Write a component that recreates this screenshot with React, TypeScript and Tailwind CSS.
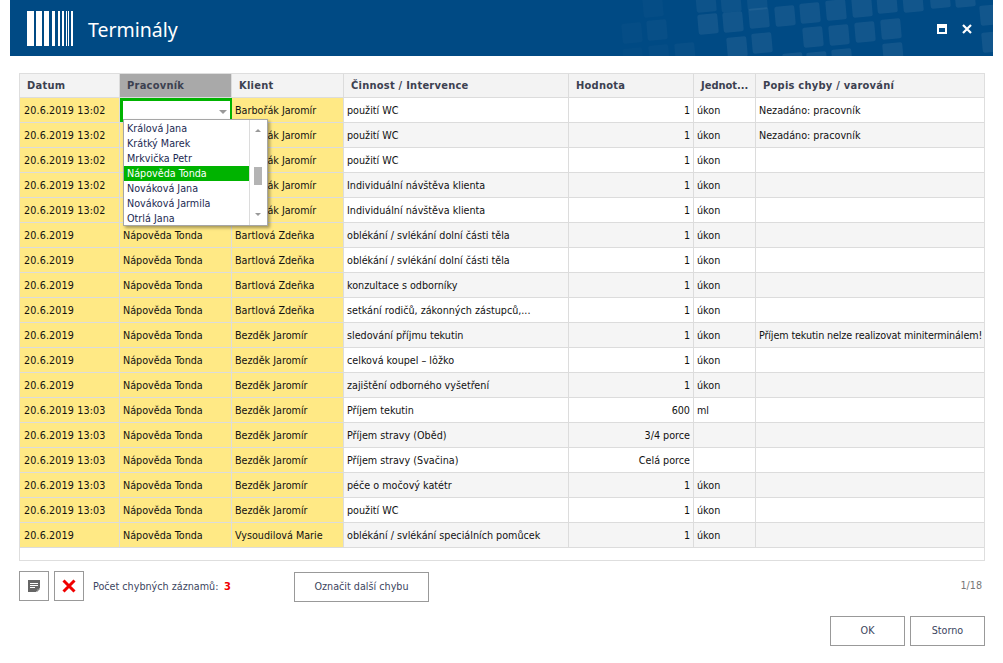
type Row = {
  datum: string;
  pracovnik: string;
  klient: string;
  cinnost: string;
  hodnota: string;
  jednotka: string;
  popis?: string;
};

const barborak = 'Barbořák Jaromír';
const bartlova = 'Bartlová Zdeňka';
const bezdek = 'Bezděk Jaromír';
const tonda = 'Nápověda Tonda';

const rows: Row[] = [
  { datum: '20.6.2019 13:02', pracovnik: '', klient: barborak, cinnost: 'použití WC', hodnota: '1', jednotka: 'úkon', popis: 'Nezadáno: pracovník' },
  { datum: '20.6.2019 13:02', pracovnik: '', klient: barborak, cinnost: 'použití WC', hodnota: '1', jednotka: 'úkon', popis: 'Nezadáno: pracovník' },
  { datum: '20.6.2019 13:02', pracovnik: '', klient: barborak, cinnost: 'použití WC', hodnota: '1', jednotka: 'úkon' },
  { datum: '20.6.2019 13:02', pracovnik: '', klient: barborak, cinnost: 'Individuální návštěva klienta', hodnota: '1', jednotka: 'úkon' },
  { datum: '20.6.2019 13:02', pracovnik: '', klient: barborak, cinnost: 'Individuální návštěva klienta', hodnota: '1', jednotka: 'úkon' },
  { datum: '20.6.2019', pracovnik: tonda, klient: bartlova, cinnost: 'oblékání / svlékání dolní části těla', hodnota: '1', jednotka: 'úkon' },
  { datum: '20.6.2019', pracovnik: tonda, klient: bartlova, cinnost: 'oblékání / svlékání dolní části těla', hodnota: '1', jednotka: 'úkon' },
  { datum: '20.6.2019', pracovnik: tonda, klient: bartlova, cinnost: 'konzultace s odborníky', hodnota: '1', jednotka: 'úkon' },
  { datum: '20.6.2019', pracovnik: tonda, klient: bartlova, cinnost: 'setkání rodičů, zákonných zástupců,...', hodnota: '1', jednotka: 'úkon' },
  { datum: '20.6.2019', pracovnik: tonda, klient: bezdek, cinnost: 'sledování příjmu tekutin', hodnota: '1', jednotka: 'úkon', popis: 'Příjem tekutin nelze realizovat miniterminálem!' },
  { datum: '20.6.2019', pracovnik: tonda, klient: bezdek, cinnost: 'celková koupel – lôžko', hodnota: '1', jednotka: 'úkon' },
  { datum: '20.6.2019', pracovnik: tonda, klient: bezdek, cinnost: 'zajištění odborného vyšetření', hodnota: '1', jednotka: 'úkon' },
  { datum: '20.6.2019 13:03', pracovnik: tonda, klient: bezdek, cinnost: 'Příjem tekutin', hodnota: '600', jednotka: 'ml' },
  { datum: '20.6.2019 13:03', pracovnik: tonda, klient: bezdek, cinnost: 'Příjem stravy (Oběd)', hodnota: '3/4 porce', jednotka: '' },
  { datum: '20.6.2019 13:03', pracovnik: tonda, klient: bezdek, cinnost: 'Příjem stravy (Svačina)', hodnota: 'Celá porce', jednotka: '' },
  { datum: '20.6.2019 13:03', pracovnik: tonda, klient: bezdek, cinnost: 'péče o močový katétr', hodnota: '1', jednotka: 'úkon' },
  { datum: '20.6.2019 13:03', pracovnik: tonda, klient: bezdek, cinnost: 'použití WC', hodnota: '1', jednotka: 'úkon' },
  { datum: '20.6.2019', pracovnik: tonda, klient: 'Vysoudilová Marie', cinnost: 'oblékání / svlékání speciálních pomůcek', hodnota: '1', jednotka: 'úkon' },
];

const workers = ['Králová Jana', 'Krátký Marek', 'Mrkvička Petr', 'Nápověda Tonda', 'Nováková Jana', 'Nováková Jarmila', 'Otrlá Jana'];

// [x, y, opacity] of the tiles in the header picture
const tiles = [
  [653, 7, 0.02], [706, 2, 0.05], [731, 2, 0.05], [757, 0, 0.05],
  [708, 24, 0.07], [733, 22, 0.07], [759, 18, 0.07], [785, 16, 0.07], [810, 13, 0.07], [836, 10, 0.07], [862, 7, 0.07], [887, 3, 0.07], [913, 2, 0.07], [940, -2, 0.07], [965, -3, 0.07], [990, 15, 0.07],
  [632, 33, 0.02], [657, 30, 0.03], [813, 37, 0.07], [839, 35, 0.07], [865, 32, 0.07], [891, 29, 0.07], [992, 42, 0.07],
  [737, 47, 0.07], [762, 43, 0.07], [893, 53, 0.07], [685, 53, 0.03], [659, 55, 0.02], [633, 58, 0.01], [793, 63, 0.07], [817, 62, 0.07], [842, 59, 0.07],
];

const bars = [[27, 7], [36, 6], [44, 5], [52, 3], [58, 2], [62, 2], [66, 1], [68, 1], [71, 1], [72, 1]];

const head = 'flex items-center pt-[1px] pl-[7px] border-r border-[#dcdcdc] whitespace-nowrap overflow-hidden';
const cell = 'flex items-center pt-[3px] border-r border-[#dcdcdc] whitespace-nowrap overflow-hidden';

function App() {
  return (
    <div className="w-[1003px] h-[663px] bg-white overflow-hidden text-[10.7px] text-[#111] font-['DejaVu_Sans_Condensed','DejaVu_Sans',sans-serif]">
      {/* Title bar */}
      <div className="relative mx-[10px] h-[56px] bg-[#004a84] flex items-center overflow-hidden">
        <svg className="absolute left-[-10px] top-0" width="1003" height="56">
          {tiles.map(([x, y, o]) => (
            <rect key={`${x}-${y}`} x={x - 10} y={y - 10} width="20" height="20" rx="2" fill="#fff" fillOpacity={o} transform={`rotate(-5 ${x} ${y})`} />
          ))}
          {bars.map(([x, w]) => (
            <rect key={x} x={x} y="11" width={w} height="35" fill="#fff" />
          ))}
        </svg>
        <span className="relative ml-[78px] mt-[4px] text-[19.5px] text-white font-['Noto_Sans',sans-serif]">Terminály</span>
        <div className="relative ml-auto mr-[21px] mt-[2px] flex items-center gap-[15px]">
          <svg width="10" height="10" viewBox="0 0 10 10">
            <path d="M0 0h10v10H0z M2 4v4h6V4z" fill="#fff" fillRule="evenodd" />
          </svg>
          <svg width="10" height="10" viewBox="0 0 10 10">
            <path d="M1 1l8 8M9 1l-8 8" stroke="#fff" strokeWidth="2.2" />
          </svg>
        </div>
      </div>

      {/* Grid */}
      <div className="relative ml-[19px] mt-[17px] w-[966px] h-[488px] border border-[#dedede]">
        <div className="grid grid-cols-[100px_112px_112px_225px_125px_62px_228px] h-[24px] border-b border-[#dcdcdc] bg-[#f3f3f3] font-bold text-[11px] tracking-[0.25px] text-[#3c4150]">
          <div className={head}>Datum</div>
          <div className={`${head} bg-[#a9a9a9]`}>Pracovník</div>
          <div className={head}>Klient</div>
          <div className={head}>Činnost / Intervence</div>
          <div className={head}>Hodnota</div>
          <div className={`${head} tracking-normal`}>Jednot...</div>
          <div className={`${head} border-r-0`}>Popis chyby / varování</div>
        </div>
        {rows.map((r, i) => (
          <div
            key={i}
            className={`grid grid-cols-[100px_112px_112px_225px_125px_62px_228px] h-[25px] border-b border-[#dcdcdc] ${i % 2 ? 'bg-[#f5f5f5]' : 'bg-white'}`}
          >
            <div className={`${cell} pl-[4px] bg-[#ffe985] tracking-[0.12px]`}>{r.datum}</div>
            {i === 0 ? (
              <div className="flex items-center justify-end border-[3px] border-b-0 border-[#00b300] bg-white pr-[3px] -mr-[1px]">
                <div className="w-0 h-0 border-x-[4px] border-x-transparent border-t-[4px] border-t-[#999]" />
              </div>
            ) : (
              <div className={`${cell} pl-[3px] bg-[#ffe985]`}>{r.pracovnik}</div>
            )}
            <div className={`${cell} pl-[3px] bg-[#ffe985]`}>{r.klient}</div>
            <div className={`${cell} pl-[3px]`}>{r.cinnost}</div>
            <div className={`${cell} justify-end pr-[3px]`}>{r.hodnota}</div>
            <div className={`${cell} pl-[3px]`}>{r.jednotka}</div>
            <div className={`${cell} pl-[3px] border-r-0 ${i === 9 ? 'tracking-[-0.12px]' : ''}`}>{r.popis}</div>
          </div>
        ))}

        {/* Open combo list */}
        <div className="absolute left-[103px] top-[45px] w-[145px] h-[107px] flex bg-white border border-[#a6a6a6] shadow-[2px_2px_3px_rgba(0,0,0,0.35)]">
          <div className="w-[125px] pt-[1px]">
            {workers.map((w) => (
              <div
                key={w}
                className={`h-[15px] leading-[15px] pl-[3px] ${w === tonda ? 'bg-[#00b300] text-white' : 'text-[#1c2a52]'}`}
              >
                {w}
              </div>
            ))}
          </div>
          <div className="relative flex-1 border-l border-[#dcdcdc]">
            <div className="absolute left-[5px] top-[9px] w-0 h-0 border-x-[3px] border-x-transparent border-b-[3px] border-b-[#999]" />
            <div className="absolute left-[4px] top-[47px] w-[8px] h-[18px] bg-[#b4b4b4]" />
            <div className="absolute left-[5px] bottom-[9px] w-0 h-0 border-x-[3px] border-x-transparent border-t-[3px] border-t-[#999]" />
          </div>
        </div>
      </div>

      {/* Footer */}
      <div className="ml-[19px] mr-[21px] mt-[9px] h-[32px] flex items-center text-[#3c4560]">
        <button className="w-[30px] h-[30px] flex items-center justify-center border border-[#999] bg-white">
          <svg width="12" height="12" viewBox="0 0 12 12">
            <path d="M0 0h12v8l-4 4H0z" fill="#666" />
            <path d="M2 3.5h8M2 5.5h8M2 7.5h5" stroke="#fff" />
            <path d="M9 9h3l-3 3z" fill="#888" />
          </svg>
        </button>
        <button className="ml-[5px] w-[30px] h-[30px] flex items-center justify-center border border-[#999] bg-white">
          <svg width="14" height="14" viewBox="0 0 14 14">
            <path d="M1.5 1.5l11 11M12.5 1.5l-11 11" stroke="#f00000" strokeWidth="3" />
          </svg>
        </button>
        <span className="ml-[9px] mt-[3px] w-[131px] whitespace-nowrap">Počet chybných záznamů:</span>
        <span className="mt-[3px] w-[70px] font-bold text-[11px] text-[#f00000]">3</span>
        <button className="mt-[2px] w-[135px] h-[30px] border border-[#999] bg-white">Označit další chybu</button>
        <span className="ml-auto text-[#777]">1/18</span>
      </div>
      <div className="mr-[18px] mt-[14px] flex justify-end gap-[5px] text-[#3c4560]">
        <button className="w-[75px] h-[30px] border border-[#999] bg-white">OK</button>
        <button className="w-[75px] h-[30px] border border-[#999] bg-white">Storno</button>
      </div>
    </div>
  );
}

export default App;
